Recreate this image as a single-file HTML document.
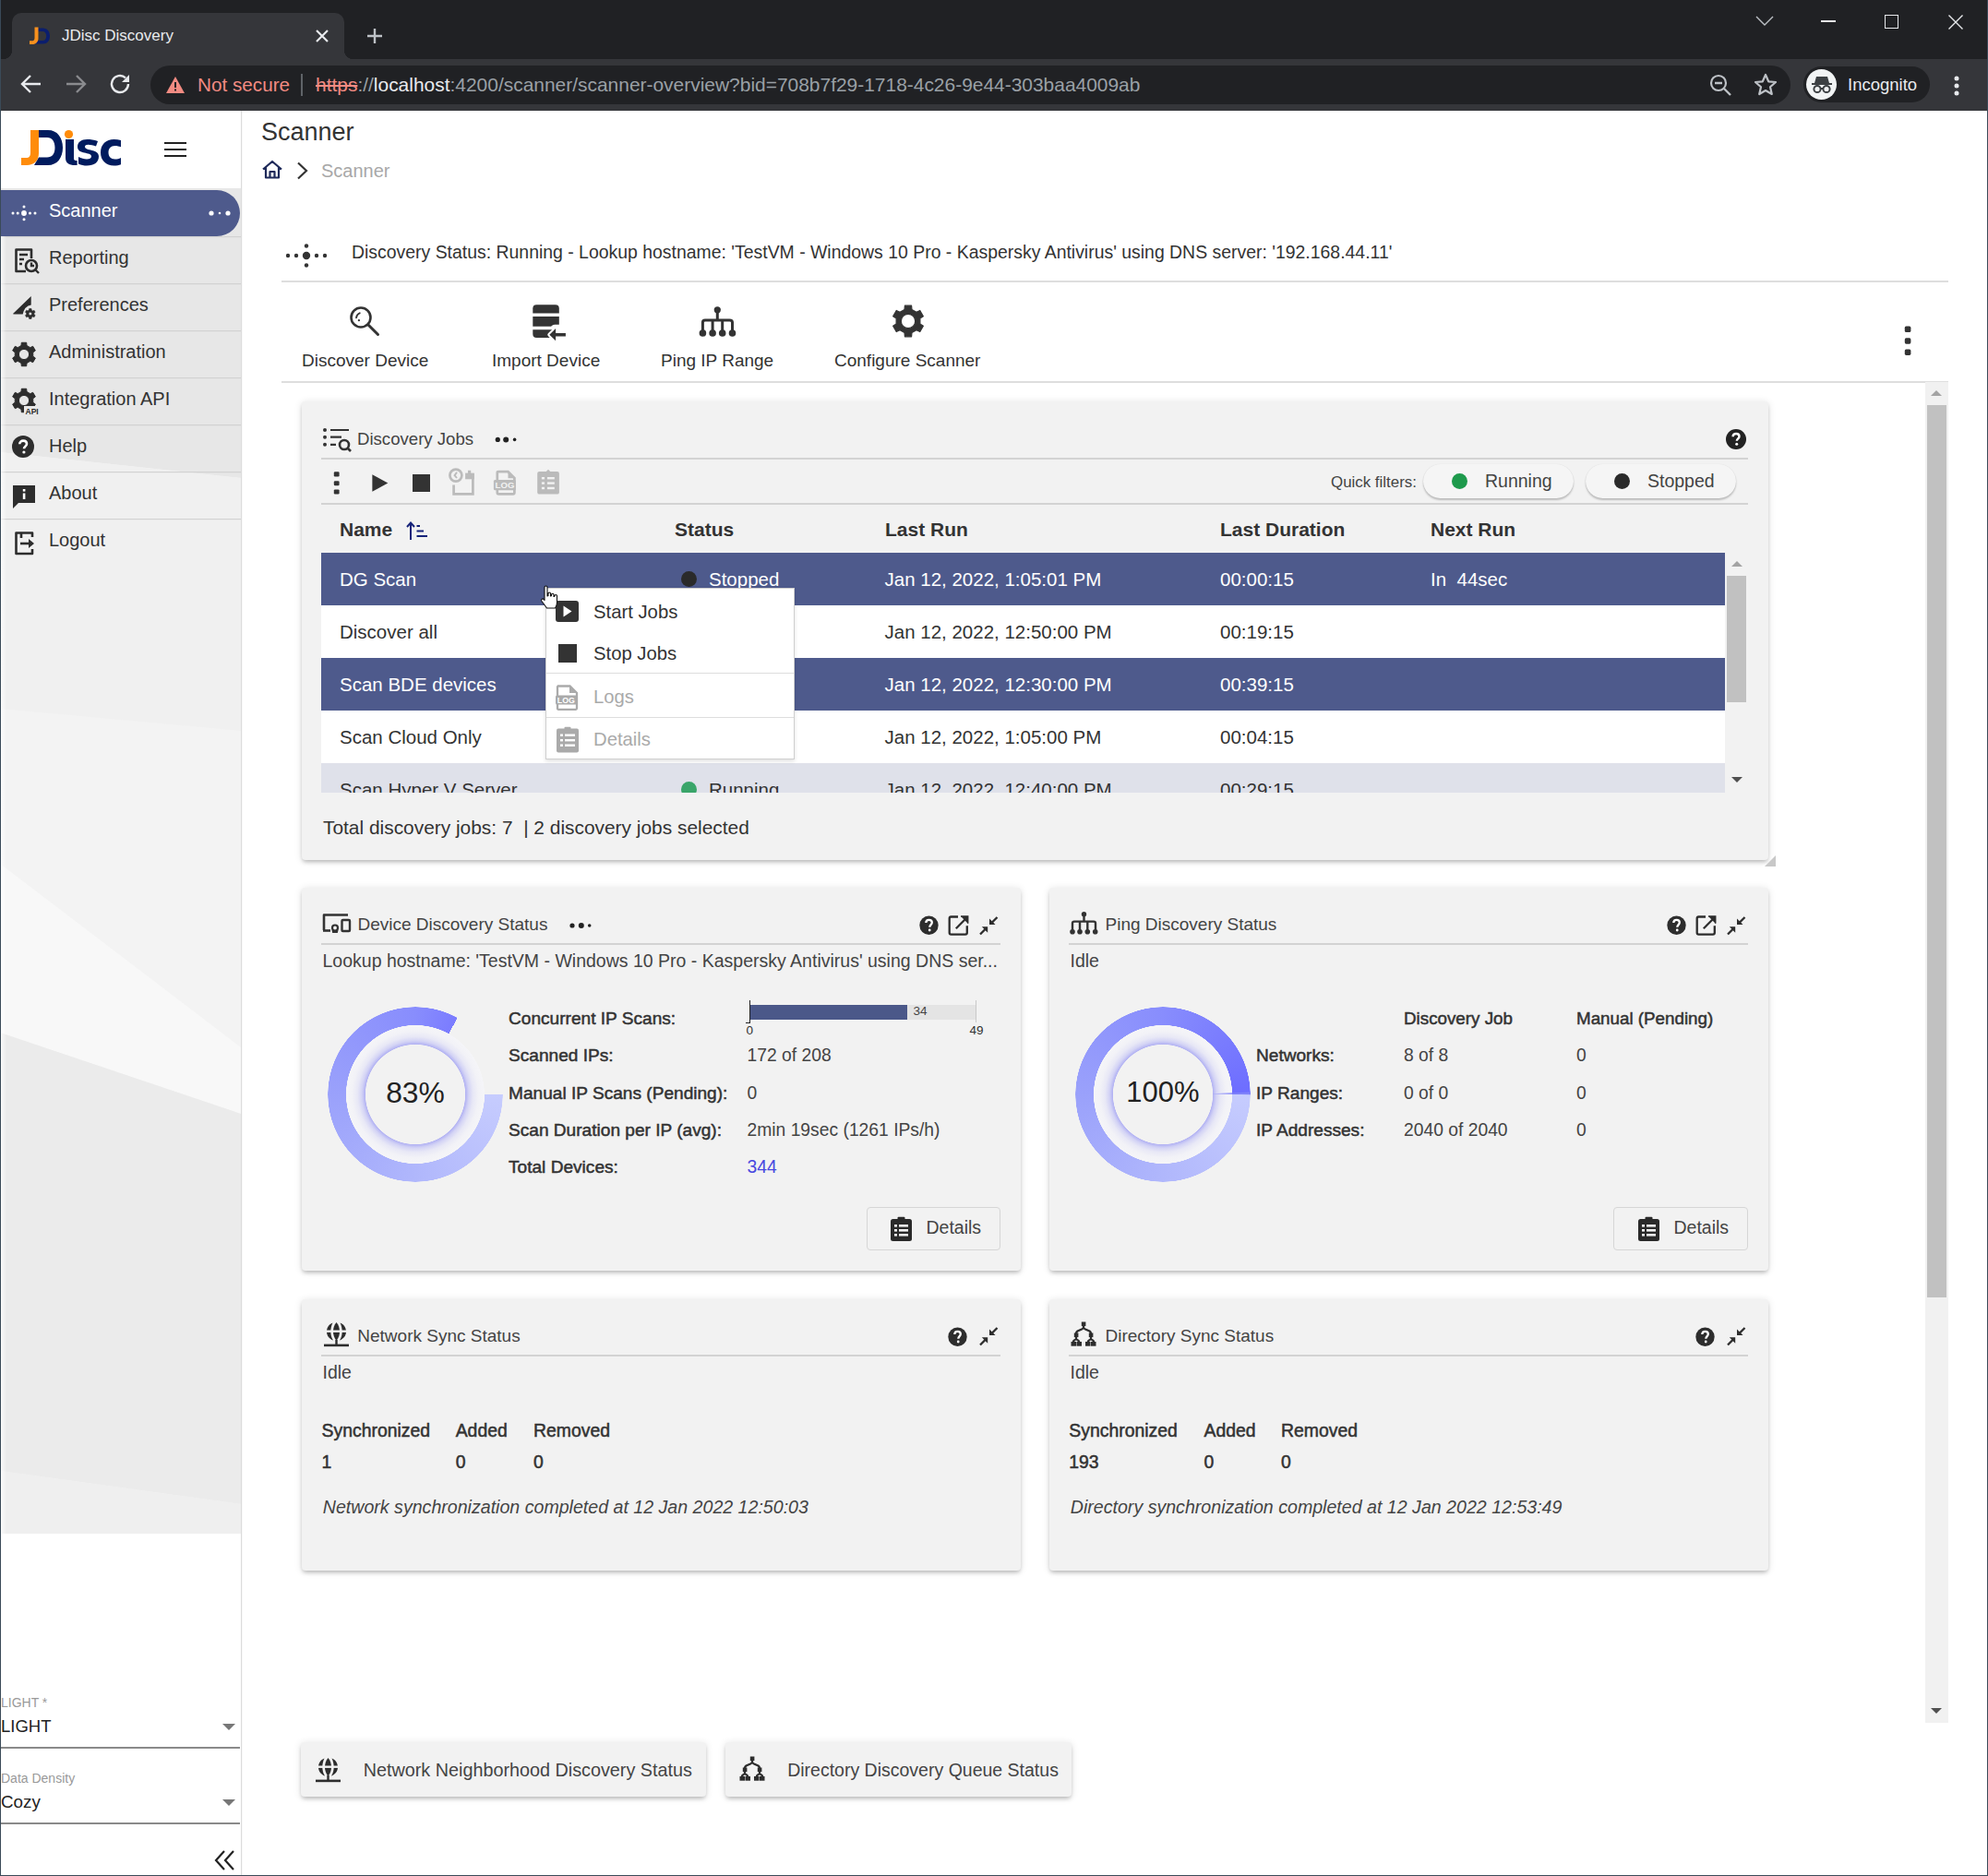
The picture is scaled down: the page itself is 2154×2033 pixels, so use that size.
<!DOCTYPE html>
<html><head><meta charset="utf-8"><title>JDisc Discovery</title>
<style>
*{box-sizing:border-box;margin:0;padding:0}
html,body{width:2154px;height:2033px;overflow:hidden;background:#fff;font-family:"Liberation Sans",sans-serif;color:#333}
.a{position:absolute}
.t{position:absolute;white-space:nowrap;line-height:30px;height:30px}
.sb{-webkit-text-stroke:0.5px currentColor}
svg{position:absolute;overflow:visible}
</style></head><body>
<!-- ============ BROWSER CHROME ============ -->
<div class="a" style="left:0;top:0;width:2154px;height:64px;background:#202124"></div>
<div class="a" style="left:13px;top:14px;width:360px;height:50px;background:#35363a;border-radius:10px 10px 0 0"></div>
<div class="a" style="left:3px;top:54px;width:10px;height:10px;background:radial-gradient(circle at 0 0,#202124 10px,#35363a 10.5px)"></div>
<div class="a" style="left:373px;top:54px;width:10px;height:10px;background:radial-gradient(circle at 100% 0,#202124 10px,#35363a 10.5px)"></div>
<!-- favicon -->
<svg style="left:31px;top:29px" width="24" height="20" viewBox="0 0 24 20">
 <path d="M10 1.5H15.5C20 1.5 23 5 23 10C23 15 20 18.5 15.5 18.5H7.5L9.5 15H15C17.8 15 19.2 13 19.2 10C19.2 7 17.8 5 15 5H10Z" fill="#0b1e6e"/>
 <path d="M6.5 0.5H10.5V12.5C10.5 16.5 8 19 4 19H1V15.3H3.5C5.5 15.3 6.5 14.5 6.5 12Z" fill="#f7901e"/>
</svg>
<div class="t" style="left:67px;top:24px;font-size:17px;color:#e8eaed">JDisc Discovery</div>
<svg style="left:341px;top:31px" width="16" height="16" viewBox="0 0 16 16"><path d="M2 2L14 14M14 2L2 14" stroke="#e8eaed" stroke-width="2.2"/></svg>
<svg style="left:397px;top:30px" width="18" height="18" viewBox="0 0 18 18"><path d="M9 1V17M1 9H17" stroke="#bdc1c6" stroke-width="2.4"/></svg>
<!-- window controls -->
<svg style="left:1902px;top:17px" width="20" height="12" viewBox="0 0 20 12"><path d="M1 1L10 10L19 1" stroke="#bdc1c6" stroke-width="1.4" fill="none"/></svg>
<div class="a" style="left:1973px;top:22px;width:16px;height:1.5px;background:#e8eaed"></div>
<div class="a" style="left:2042px;top:16px;width:15px;height:15px;border:1.5px solid #e8eaed"></div>
<svg style="left:2111px;top:16px" width="16" height="16" viewBox="0 0 16 16"><path d="M0.5 0.5L15.5 15.5M15.5 0.5L0.5 15.5" stroke="#e8eaed" stroke-width="1.4"/></svg>
<!-- toolbar -->
<div class="a" style="left:0;top:64px;width:2154px;height:56px;background:#35363a"></div>
<svg style="left:22px;top:80px" width="24" height="22" viewBox="0 0 24 22"><path d="M22 11H3M11 2L2 11L11 20" stroke="#e8eaed" stroke-width="2.4" fill="none"/></svg>
<svg style="left:70px;top:80px" width="24" height="22" viewBox="0 0 24 22"><path d="M2 11H21M13 2L22 11L13 20" stroke="#8a8b8e" stroke-width="2.4" fill="none"/></svg>
<svg style="left:119px;top:80px" width="24" height="22" viewBox="0 0 24 22"><path d="M20 11A9 9 0 1 1 17 4.3" stroke="#e8eaed" stroke-width="2.4" fill="none"/><path d="M21 1V9H13Z" fill="#e8eaed"/></svg>
<div class="a" style="left:163px;top:71px;width:1777px;height:42px;background:#202124;border-radius:21px"></div>
<svg style="left:180px;top:83px" width="20" height="18" viewBox="0 0 20 18"><path d="M10 0L20 18H0Z" fill="#f28b82"/><path d="M9 6H11V12H9ZM9 13.5H11V15.5H9Z" fill="#202124"/></svg>
<div class="t" style="left:214px;top:77px;font-size:20.7px;color:#f28b82">Not secure</div>
<div class="a" style="left:326px;top:80px;width:2px;height:24px;background:#5f6368"></div>
<div class="t" style="left:342px;top:77px;font-size:20.95px;color:#9aa0a6"><span style="color:#f28b82;text-decoration:line-through">https</span>://<span style="color:#e8eaed">localhost</span>:4200/scanner/scanner-overview?bid=708b7f29-1718-4c26-9e44-303baa4009ab</div>
<svg style="left:1852px;top:80px" width="26" height="26" viewBox="0 0 26 26"><circle cx="10" cy="10" r="8" stroke="#bdc1c6" stroke-width="2.2" fill="none"/><path d="M6 10H14M16 16L23 23" stroke="#bdc1c6" stroke-width="2.4"/></svg>
<svg style="left:1900px;top:79px" width="26" height="26" viewBox="0 0 26 26"><path d="M13 2L16.2 9.3L24 10L18 15.3L19.8 23L13 19L6.2 23L8 15.3L2 10L9.8 9.3Z" stroke="#bdc1c6" stroke-width="2.2" fill="none" stroke-linejoin="round"/></svg>
<div class="a" style="left:1954px;top:72px;width:137px;height:39px;background:#202124;border-radius:20px"></div>
<div class="a" style="left:1957px;top:75px;width:33px;height:33px;background:#f1f3f4;border-radius:50%"></div>
<svg style="left:1962px;top:82px" width="24" height="20" viewBox="0 0 24 20"><path d="M6 1H18L20 8H4Z" fill="#3c4043"/><path d="M1 9H23" stroke="#3c4043" stroke-width="2"/><circle cx="7" cy="14.5" r="3.6" stroke="#3c4043" stroke-width="2" fill="none"/><circle cx="17" cy="14.5" r="3.6" stroke="#3c4043" stroke-width="2" fill="none"/><path d="M10.5 14H13.5" stroke="#3c4043" stroke-width="2"/></svg>
<div class="t" style="left:2002px;top:77px;font-size:18.5px;color:#e8eaed">Incognito</div>
<svg style="left:2116px;top:82px" width="8" height="22" viewBox="0 0 8 22"><circle cx="4" cy="3" r="2.5" fill="#e8eaed"/><circle cx="4" cy="11" r="2.5" fill="#e8eaed"/><circle cx="4" cy="19" r="2.5" fill="#e8eaed"/></svg>
<!-- window borders -->
<div class="a" style="left:0;top:0;width:1px;height:2033px;background:#3a4a58;z-index:50"></div>
<div class="a" style="left:2153px;top:0;width:1px;height:2033px;background:#3a4a58;z-index:50"></div>
<div class="a" style="left:0;top:2032px;width:2154px;height:1px;background:#3a4a58;z-index:50"></div>

<!-- ============ SIDEBAR ============ -->
<svg style="left:0;top:120px" width="262" height="1913" viewBox="0 120 262 1913">
 <rect x="0" y="120" width="261" height="84" fill="#fff"/>
 <rect x="0" y="204" width="261" height="1458" fill="#f3f3f3"/>
 <polygon points="0,204 261,204 261,518 0,490" fill="#e7e7e7"/>
 <polygon points="0,490 261,518 261,792 0,768" fill="#f0f0f0"/>
 <polygon points="0,936 261,1135 261,1207 0,1119" fill="#f8f8f8"/>
 <polygon points="0,1119 261,1207 261,1630 0,1594" fill="#ebebeb"/>
 <polygon points="0,1594 261,1630 261,1662 0,1662" fill="#efefef"/>
 <rect x="0" y="1662" width="261" height="371" fill="#fff"/>
 <rect x="261" y="120" width="1.2" height="1913" fill="#dcdcdc"/>
 <g fill="#d2d2d2"><rect x="0" y="256" width="261" height="1.2"/><rect x="0" y="307" width="261" height="1.2"/><rect x="0" y="358" width="261" height="1.2"/><rect x="0" y="409" width="261" height="1.2"/><rect x="0" y="460" width="261" height="1.2"/><rect x="0" y="511" width="261" height="1.2"/><rect x="0" y="562" width="261" height="1.2"/></g>
</svg>
<div class="a" style="left:1px;top:256px;width:6px;height:1406px;background:linear-gradient(to right,rgba(255,255,255,0.75),rgba(255,255,255,0))"></div>
<!-- logo -->
<svg style="left:22px;top:140px" width="112" height="42" viewBox="0 0 112 42">
 <path d="M20 1H30C40 1 46 9 46 20C46 31 40 39 30 39H15L20 30.5H29C34.5 30.5 37.5 26.5 37.5 20C37.5 13.5 34.5 9 29 9H20Z" fill="#001b5e"/>
 <path d="M11 1H20V26C20 34 15 39 7 39H1V31H6C10 31 11 29 11 25Z" fill="#ff8c0a"/>
 <circle cx="52.5" cy="5.5" r="4.6" fill="#ff8c0a"/>
 <path d="M49 11H58V32C58 33.5 59 34 61.6 34V39C53 39.5 49 37 49 31Z" fill="#001b5e"/>
 <path d="M84 13C80 11.5 76 11 72.5 11C66 11 62 14 62 19C62 28 77 24 77 29.5C77 31.5 75 32.5 72 32.5C69 32.5 66 31.5 63 30V37.5C66 39 69 39.5 72 39.5C80 39.5 85 36 85 29.5C85 21 70 24 70 19C70 17.5 71.5 16.8 73.5 16.8C76 16.8 79 17.5 82 18.5Z" fill="#001b5e"/>
 <path d="M109 12C106.5 11.3 104 11 101.5 11C93 11 87 16.5 87 25.3C87 34 93 39.5 101.5 39.5C104.5 39.5 107 39 109 38.2V31C107 32 105 32.5 102.5 32.5C98 32.5 95.5 29.5 95.5 25.3C95.5 21 98 18 102.5 18C105 18 107 18.6 109 19.3Z" fill="#001b5e"/>
</svg>
<div class="a" style="left:178px;top:154px;width:24px;height:2.3px;background:#222"></div>
<div class="a" style="left:178px;top:161px;width:24px;height:2.3px;background:#222"></div>
<div class="a" style="left:178px;top:167.5px;width:24px;height:2.3px;background:#222"></div>
<!-- nav items -->
<div class="a" style="left:0;top:206px;width:260px;height:50px;background:#4e5a8c;border-radius:0 25px 25px 0"></div>
<svg style="left:12px;top:218px" width="28" height="26" viewBox="0 0 28 26"><g fill="#fff"><circle cx="2" cy="13" r="1.5"/><circle cx="7.2" cy="13" r="1.5"/><circle cx="14" cy="13" r="2.9"/><circle cx="20.5" cy="13" r="1.5"/><circle cx="26" cy="13" r="1.5"/><circle cx="14" cy="6.1" r="1.5"/><circle cx="14" cy="19.8" r="1.5"/></g></svg>
<div class="t" style="left:53px;top:213px;font-size:20px;color:#fff">Scanner</div>
<svg style="left:222px;top:226px" width="30" height="10" viewBox="0 0 30 10"><g fill="#fff"><circle cx="7" cy="5" r="2.6"/><circle cx="16" cy="5" r="1.3"/><circle cx="25" cy="5" r="2.6"/></g></svg>
<!-- reporting icon -->
<svg style="left:14px;top:268px" width="30" height="30" viewBox="0 0 30 30"><path d="M14 26H3.5V2.5H20V12" stroke="#2d2d2d" stroke-width="2.6" fill="none" stroke-linejoin="round"/><path d="M7 8H16M7 13H12M7 18H10" stroke="#2d2d2d" stroke-width="2.4"/><circle cx="20" cy="20" r="6" stroke="#2d2d2d" stroke-width="2.6" fill="none"/><path d="M20 16.5V20H23M24.5 24.5L28 28" stroke="#2d2d2d" stroke-width="2.4" fill="none"/></svg>
<div class="t" style="left:53px;top:264px;font-size:20px">Reporting</div>
<!-- preferences icon -->
<svg style="left:13px;top:318px" width="30" height="30" viewBox="0 0 30 30"><path d="M1 22L20.7 2.9V12.6Q13.5 13.8 11.7 22.6H1.8Z" fill="#2d2d2d"/><path d="M18.50 18.01 L18.58 16.53 L21.02 16.53 L21.10 18.01 L22.61 18.88 L23.92 18.21 L25.14 20.33 L23.91 21.13 L23.91 22.87 L25.14 23.67 L23.92 25.79 L22.61 25.12 L21.10 25.99 L21.02 27.47 L18.58 27.47 L18.50 25.99 L16.99 25.12 L15.68 25.79 L14.46 23.67 L15.69 22.87 L15.69 21.13 L14.46 20.33 L15.68 18.21 L16.99 18.88Z M21.60 22.00 A1.8 1.8 0 1 0 18.00 22.00 A1.8 1.8 0 1 0 21.60 22.00Z" fill="#2d2d2d" fill-rule="evenodd" stroke="#2d2d2d" stroke-width="0.6" stroke-linejoin="round"/></svg>
<div class="t" style="left:53px;top:315px;font-size:20px">Preferences</div>
<!-- admin icon -->
<svg style="left:12px;top:370px" width="28" height="28" viewBox="0 0 28 28"><path d="M11.01 4.46 L11.30 1.28 L16.70 1.28 L16.99 4.46 L20.77 6.64 L23.66 5.30 L26.36 9.98 L23.76 11.82 L23.76 16.18 L26.36 18.02 L23.66 22.70 L20.77 21.36 L16.99 23.54 L16.70 26.72 L11.30 26.72 L11.01 23.54 L7.23 21.36 L4.34 22.70 L1.64 18.02 L4.24 16.18 L4.24 11.82 L1.64 9.98 L4.34 5.30 L7.23 6.64Z M19.60 14.00 A5.6 5.6 0 1 0 8.40 14.00 A5.6 5.6 0 1 0 19.60 14.00Z" fill="#2d2d2d" fill-rule="evenodd" stroke="#2d2d2d" stroke-width="1" stroke-linejoin="round"/></svg>
<div class="t" style="left:53px;top:366px;font-size:20px">Administration</div>
<!-- integration api icon -->
<svg style="left:12px;top:421px" width="30" height="30" viewBox="0 0 30 30"><path d="M11.01 3.46 L11.30 0.28 L16.70 0.28 L16.99 3.46 L20.77 5.64 L23.66 4.30 L26.36 8.98 L23.76 10.82 L23.76 15.18 L26.36 17.02 L23.66 21.70 L20.77 20.36 L16.99 22.54 L16.70 25.72 L11.30 25.72 L11.01 22.54 L7.23 20.36 L4.34 21.70 L1.64 17.02 L4.24 15.18 L4.24 10.82 L1.64 8.98 L4.34 4.30 L7.23 5.64Z M19.60 13.00 A5.6 5.6 0 1 0 8.40 13.00 A5.6 5.6 0 1 0 19.60 13.00Z" fill="#2d2d2d" fill-rule="evenodd" stroke="#2d2d2d" stroke-width="1" stroke-linejoin="round"/><path d="M14 19H30V30H14Z" fill="#e7e7e7"/><text x="15.5" y="27.5" font-family="Liberation Sans" font-weight="700" font-size="8.5" fill="#2d2d2d">API</text></svg>
<div class="t" style="left:53px;top:417px;font-size:20px">Integration API</div>
<!-- help icon -->
<svg style="left:13px;top:472px" width="26" height="26" viewBox="0 0 26 26"><circle cx="12" cy="12" r="12" fill="#2d2d2d"/><path d="M8.3 9.3C8.3 7 10 5.6 12.2 5.6C14.4 5.6 16 7 16 9C16 11.5 13 11.7 13 14.3" stroke="#fff" stroke-width="2.6" fill="none"/><circle cx="12.9" cy="18" r="1.6" fill="#fff"/></svg>
<div class="t" style="left:53px;top:468px;font-size:20px">Help</div>
<!-- about icon -->
<svg style="left:12px;top:524px" width="28" height="28" viewBox="0 0 28 28"><path d="M2 2H26V21H8L2 27Z" fill="#2d2d2d"/><rect x="12.8" y="6" width="2.6" height="2.6" fill="#fff"/><rect x="12.8" y="10.5" width="2.6" height="6.5" fill="#fff"/></svg>
<div class="t" style="left:53px;top:519px;font-size:20px">About</div>
<!-- logout icon -->
<svg style="left:14px;top:574px" width="28" height="30" viewBox="0 0 28 30"><path d="M9 9V3.5H21V8M21 21V26H3.5V3.5H9" stroke="#2d2d2d" stroke-width="2.6" fill="none" stroke-linejoin="round"/><path d="M8 15H20" stroke="#2d2d2d" stroke-width="2.6"/><path d="M17 10L23 15L17 20Z" fill="#2d2d2d"/></svg>
<div class="t" style="left:53px;top:570px;font-size:20px">Logout</div>
<!-- bottom selects -->
<div class="t" style="left:1px;top:1830px;font-size:14px;color:#999">LIGHT *</div>
<div class="t" style="left:1px;top:1856px;font-size:18.5px;color:#222">LIGHT</div>
<svg style="left:241px;top:1868px" width="14" height="8" viewBox="0 0 14 8"><path d="M0 0H14L7 7Z" fill="#777"/></svg>
<div class="a" style="left:1px;top:1893px;width:259px;height:1.5px;background:#8a8a8a"></div>
<div class="t" style="left:1px;top:1912px;font-size:14px;color:#999">Data Density</div>
<div class="t" style="left:1px;top:1938px;font-size:18.8px;color:#222">Cozy</div>
<svg style="left:241px;top:1950px" width="14" height="8" viewBox="0 0 14 8"><path d="M0 0H14L7 7Z" fill="#777"/></svg>
<div class="a" style="left:1px;top:1975px;width:259px;height:1.5px;background:#8a8a8a"></div>
<svg style="left:232px;top:2005px" width="24" height="22" viewBox="0 0 24 22"><path d="M11 1L2 11L11 21M21 1L12 11L21 21" stroke="#222" stroke-width="2.2" fill="none"/></svg>

<!-- ============ HEADER ============ -->
<div class="t" style="left:283px;top:128px;font-size:27px;color:#333">Scanner</div>
<svg style="left:283px;top:173px" width="24" height="21" viewBox="0 0 24 21"><path d="M2 10.5L12 2L22 10.5M5 8.5V19.5H19V8.5M9.5 19.5V13H14.5V19.5" stroke="#1f2a5a" stroke-width="2.2" fill="none" stroke-linejoin="round"/></svg>
<svg style="left:321px;top:175px" width="14" height="20" viewBox="0 0 14 20"><path d="M2 1.5L11 10L2 18.5" stroke="#333" stroke-width="2.2" fill="none"/></svg>
<div class="t" style="left:348px;top:170px;font-size:20px;color:#a8a8a8">Scanner</div>
<!-- status line -->
<svg style="left:309px;top:262.7px" width="48" height="28" viewBox="0 0 48 28"><g fill="#333"><circle cx="3" cy="14" r="2.2"/><circle cx="12" cy="14" r="2.2"/><circle cx="23" cy="14" r="4.2"/><circle cx="34" cy="14" r="2.2"/><circle cx="43" cy="14" r="2.2"/><circle cx="23" cy="3.5" r="2.2"/><circle cx="23" cy="24.5" r="2.2"/></g></svg>
<div class="t" style="left:381px;top:258px;font-size:19.43px;color:#333">Discovery Status: Running - Lookup hostname: 'TestVM - Windows 10 Pro - Kaspersky Antivirus' using DNS server: '192.168.44.11'</div>
<div class="a" style="left:305px;top:304px;width:1806px;height:1.5px;background:#dedede"></div>
<!-- toolbar -->
<svg style="left:378px;top:331px" width="36" height="36" viewBox="0 0 36 36"><circle cx="13" cy="13" r="10.5" stroke="#333" stroke-width="2.6" fill="none"/><path d="M21 21L31.5 31.5" stroke="#333" stroke-width="3" stroke-linecap="round"/><path d="M11.8 8.3A6.5 6.5 0 0 0 8 13.3" stroke="#333" stroke-width="1.8" fill="none" stroke-linecap="round"/><circle cx="10.9" cy="16.2" r="1.15" fill="#333"/></svg>
<div class="t" style="left:327px;top:376px;font-size:19px">Discover Device</div>
<svg style="left:576px;top:329px" width="42" height="44" viewBox="0 0 42 44"><path d="M5.3 1.3H25.8Q29.8 1.3 29.8 5.3V10.4H1.3V5.3Q1.3 1.3 5.3 1.3Z" fill="#333"/><path d="M1.3 14.1H29.8V22.7H25Q23 22.7 21 24.7H1.3Z" fill="#333"/><path d="M1.3 28.2H23.5V37H5.3Q1.3 37 1.3 33Z" fill="#333"/><path d="M19.3 33.7L26.1 27V32H36.9V35.5H26.1V40.3Z" fill="#333" stroke="#fff" stroke-width="4" stroke-linejoin="round"/><path d="M19.3 33.7L26.1 27V32H36.9V35.5H26.1V40.3Z" fill="#333"/></svg>
<div class="t" style="left:533px;top:376px;font-size:19px">Import Device</div>
<svg style="left:756px;top:331px" width="44" height="36" viewBox="0 0 44 36"><circle cx="21.3" cy="4.8" r="3.6" fill="#333"/><path d="M21.3 5V16M5.4 30V18.5Q5.4 16 8 16H34.5Q37.5 16 37.5 18.5V30M16.1 16V30M26.7 16V30" stroke="#333" stroke-width="3" fill="none"/><g fill="#333"><circle cx="5.4" cy="30" r="3.8"/><circle cx="16.1" cy="30" r="3.8"/><circle cx="26.7" cy="30" r="3.8"/><circle cx="37.5" cy="30" r="3.8"/></g></svg>
<div class="t" style="left:716px;top:376px;font-size:19px">Ping IP Range</div>
<svg style="left:964.7px;top:329.2px" width="38" height="38" viewBox="0 0 38 38"><path d="M15.05 6.40 L15.42 2.18 L22.58 2.18 L22.95 6.40 L27.93 9.28 L31.78 7.49 L35.36 13.68 L31.88 16.12 L31.88 21.88 L35.36 24.32 L31.78 30.51 L27.93 28.72 L22.95 31.60 L22.58 35.82 L15.42 35.82 L15.05 31.60 L10.07 28.72 L6.22 30.51 L2.64 24.32 L6.12 21.88 L6.12 16.12 L2.64 13.68 L6.22 7.49 L10.07 9.28Z M26.70 19.00 A7.7 7.7 0 1 0 11.30 19.00 A7.7 7.7 0 1 0 26.70 19.00Z" fill="#333" fill-rule="evenodd" stroke="#333" stroke-width="1.2" stroke-linejoin="round"/></svg>
<div class="t" style="left:904px;top:376px;font-size:19px">Configure Scanner</div>
<svg style="left:2062px;top:353px" width="12" height="32" viewBox="0 0 12 32"><g fill="#333"><rect x="1.8" y="0.6" width="6.6" height="6.4" rx="1.6"/><rect x="1.8" y="13.3" width="6.6" height="6.4" rx="1.6"/><rect x="1.8" y="25.5" width="6.6" height="6.4" rx="1.6"/></g></svg>
<div class="a" style="left:305px;top:413px;width:1806px;height:1.5px;background:#dedede"></div>
<!-- main scrollbar -->
<div class="a" style="left:2086px;top:414px;width:25px;height:1453px;background:#f1f1f1"></div>
<div class="a" style="left:2088px;top:439px;width:21px;height:967px;background:#c1c1c1"></div>
<svg style="left:2092px;top:423px" width="12" height="7" viewBox="0 0 12 7"><path d="M0 6H12L6 0Z" fill="#a3a3a3"/></svg>
<svg style="left:2092px;top:1851px" width="12" height="7" viewBox="0 0 12 7"><path d="M0 0H12L6 6Z" fill="#505050"/></svg>

<!-- ============ CARD 1: DISCOVERY JOBS ============ -->
<div class="a" style="left:327px;top:435px;width:1589px;height:497px;background:#f2f2f2;border-radius:4px;box-shadow:0 3px 4px -1px rgba(0,0,0,.22),0 1px 9px 0 rgba(0,0,0,.12)"></div>
<svg style="left:1911px;top:926px" width="14" height="14" viewBox="0 0 14 14"><path d="M13 1V13H1Z" fill="#c8c8c8"/></svg>
<svg style="left:348px;top:462px" width="36" height="30" viewBox="0 0 36 30"><g fill="#333"><circle cx="4" cy="4" r="2"/><circle cx="4" cy="11.7" r="2"/><circle cx="4" cy="19.8" r="2"/></g><path d="M10 4H30M10 11.7H22M10 19.8H16" stroke="#333" stroke-width="2.2"/><circle cx="25" cy="20" r="5" stroke="#333" stroke-width="2.6" fill="none"/><path d="M28.5 23.5L32 27" stroke="#333" stroke-width="2.6"/></svg>
<div class="t" style="left:387px;top:461px;font-size:18.6px;color:#444">Discovery Jobs</div>
<svg style="left:534px;top:471px" width="28" height="11" viewBox="0 0 28 11"><g fill="#222"><circle cx="5.3" cy="5.4" r="2.6"/><circle cx="14.2" cy="5.4" r="3"/><circle cx="23.6" cy="5.4" r="1.8"/></g></svg>
<svg style="left:1869px;top:464px" width="24" height="24" viewBox="0 0 24 24"><circle cx="12" cy="12" r="11" fill="#222"/><path d="M8.6 9.3C8.6 7.2 10.1 6 12.1 6C14.1 6 15.5 7.2 15.5 9C15.5 11.3 12.8 11.5 12.8 13.8" stroke="#fff" stroke-width="2.4" fill="none"/><circle cx="12.7" cy="17.3" r="1.5" fill="#fff"/></svg>
<div class="a" style="left:348px;top:496px;width:1546px;height:1.5px;background:#d3d3d3"></div>
<!-- card toolbar -->
<svg style="left:361px;top:511px" width="8" height="29" viewBox="0 0 8 29"><g fill="#333"><rect x="0.8" y="0.3" width="5.8" height="5.2" rx="1.2"/><rect x="0.8" y="10.2" width="5.8" height="5" rx="1.2"/><rect x="0.8" y="19.4" width="5.8" height="5" rx="1.2"/></g></svg>
<svg style="left:403px;top:514px" width="18" height="19" viewBox="0 0 18 19"><path d="M0.4 0.2L17.3 9.4L0.4 18.7Z" fill="#333"/></svg>
<div class="a" style="left:447px;top:514px;width:19px;height:19px;background:#333"></div>
<svg style="left:480px;top:500px" width="135" height="45" viewBox="0 0 135 45"><g fill="none" stroke="#bbb" stroke-width="2.7"><circle cx="13.9" cy="15.1" r="6.5"/><path d="M11.6 25.5V35.3H32.4V13"/><path d="M58.8 23V11.4Q58.8 11.2 60 11.2H70.5L77.4 18V33.8Q77.4 35.3 75.9 35.3H60.3Q58.8 35.3 58.8 33.8V31"/></g><path d="M15 11.8L12.6 15.2L15 18" stroke="#bbb" stroke-width="1.9" fill="none"/><path d="M24.1 12.6H33.8V19.3H24.1Z" fill="#bbb"/><rect x="27" y="9.8" width="3.2" height="3.5" fill="#bbb"/><path d="M70.5 11.2V18.3H78.7Z" fill="#bbb"/><rect x="54.9" y="20" width="23.9" height="11.2" rx="1.5" fill="#bbb"/><text x="56.4" y="29.3" font-family="Liberation Sans" font-weight="700" font-size="9.6" letter-spacing="0.2" fill="#f2f2f2">LOG</text><rect x="102.2" y="10.9" width="23.7" height="24.7" rx="2.2" fill="#bbb"/><path d="M111.3 11.5L114 8.8L116.7 11.5Z" fill="#bbb"/><g fill="#f2f2f2"><rect x="106.9" y="17" width="3.1" height="2.4"/><rect x="106.9" y="22.4" width="3.1" height="2.4"/><rect x="106.9" y="27.8" width="3.1" height="2.4"/><rect x="113" y="17" width="7.8" height="2.4"/><rect x="113" y="22.4" width="7.8" height="2.4"/><rect x="113" y="27.8" width="7.8" height="2.4"/></g></svg>
<div class="t" style="left:1442px;top:508px;font-size:16.9px;color:#444">Quick filters:</div>
<div class="a" style="left:1542px;top:503px;width:163px;height:37px;background:#f5f5f5;border-radius:19px;box-shadow:0 2px 2px rgba(0,0,0,0.22),0 0 1px rgba(0,0,0,0.12)"></div>
<div class="a" style="left:1573px;top:513px;width:17px;height:17px;border-radius:50%;background:#1e9a4c"></div>
<div class="t" style="left:1609px;top:506px;font-size:19.5px;color:#444">Running</div>
<div class="a" style="left:1718px;top:503px;width:163px;height:37px;background:#f5f5f5;border-radius:19px;box-shadow:0 2px 2px rgba(0,0,0,0.22),0 0 1px rgba(0,0,0,0.12)"></div>
<div class="a" style="left:1749px;top:513px;width:17px;height:17px;border-radius:50%;background:#2a2a2a"></div>
<div class="t" style="left:1785px;top:506px;font-size:19.5px;color:#444">Stopped</div>
<div class="a" style="left:348px;top:545px;width:1546px;height:1.5px;background:#d3d3d3"></div>
<!-- table header -->
<div class="t" style="left:368px;top:559px;font-size:21px;font-weight:700;color:#333">Name</div>
<svg style="left:440px;top:565px" width="26" height="22" viewBox="0 0 26 22"><path d="M5 2V20M1 6L5 1.5L9 6" stroke="#16237a" stroke-width="2" fill="none"/><path d="M11.5 5H15M11.5 10.5H19M11.5 16H23" stroke="#16237a" stroke-width="2.2"/></svg>
<div class="t" style="left:731px;top:559px;font-size:21px;font-weight:700;color:#333">Status</div>
<div class="t" style="left:959px;top:559px;font-size:21px;font-weight:700;color:#333">Last Run</div>
<div class="t" style="left:1322px;top:559px;font-size:21px;font-weight:700;color:#333">Last Duration</div>
<div class="t" style="left:1550px;top:559px;font-size:21px;font-weight:700;color:#333">Next Run</div>
<!-- table body -->
<div class="a" style="left:348px;top:599px;width:1521px;height:260px;overflow:hidden">
 <div class="a" style="left:0;top:0;width:1521px;height:57px;background:#4e5a8c"></div>
 <div class="a" style="left:0;top:57px;width:1521px;height:57px;background:#fff"></div>
 <div class="a" style="left:0;top:114px;width:1521px;height:57px;background:#4e5a8c"></div>
 <div class="a" style="left:0;top:171px;width:1521px;height:57px;background:#fff"></div>
 <div class="a" style="left:0;top:228px;width:1521px;height:57px;background:#dfe1ea"></div>
 <div class="t" style="left:20px;top:13.5px;font-size:20.5px;color:#fff">DG Scan</div>
 <div class="a" style="left:390px;top:20px;width:17px;height:17px;border-radius:50%;background:#2a2a2a"></div>
 <div class="t" style="left:420px;top:13.5px;font-size:20.5px;color:#fff">Stopped</div>
 <div class="t" style="left:610.5px;top:13.5px;font-size:20.5px;color:#fff">Jan 12, 2022, 1:05:01 PM</div>
 <div class="t" style="left:974px;top:13.5px;font-size:20.5px;color:#fff">00:00:15</div>
 <div class="t" style="left:1202px;top:13.5px;font-size:20.5px;color:#fff">In&nbsp; 44sec</div>
 <div class="t" style="left:20px;top:70.5px;font-size:20.5px;color:#333">Discover all</div>
 <div class="t" style="left:610.5px;top:70.5px;font-size:20.5px;color:#333">Jan 12, 2022, 12:50:00 PM</div>
 <div class="t" style="left:974px;top:70.5px;font-size:20.5px;color:#333">00:19:15</div>
 <div class="t" style="left:20px;top:127.5px;font-size:20.5px;color:#fff">Scan BDE devices</div>
 <div class="t" style="left:610.5px;top:127.5px;font-size:20.5px;color:#fff">Jan 12, 2022, 12:30:00 PM</div>
 <div class="t" style="left:974px;top:127.5px;font-size:20.5px;color:#fff">00:39:15</div>
 <div class="t" style="left:20px;top:184.5px;font-size:20.5px;color:#333">Scan Cloud Only</div>
 <div class="t" style="left:610.5px;top:184.5px;font-size:20.5px;color:#333">Jan 12, 2022, 1:05:00 PM</div>
 <div class="t" style="left:974px;top:184.5px;font-size:20.5px;color:#333">00:04:15</div>
 <div class="t" style="left:20px;top:241.5px;font-size:20.5px;color:#333">Scan Hyper V Server</div>
 <div class="a" style="left:390px;top:248px;width:17px;height:17px;border-radius:50%;background:#3aa56a"></div>
 <div class="t" style="left:420px;top:241.5px;font-size:20.5px;color:#333">Running</div>
 <div class="t" style="left:610.5px;top:241.5px;font-size:20.5px;color:#333">Jan 12, 2022, 12:40:00 PM</div>
 <div class="t" style="left:974px;top:241.5px;font-size:20.5px;color:#333">00:29:15</div>
</div>
<!-- inner scrollbar -->
<div class="a" style="left:1871px;top:624px;width:21px;height:137px;background:#c1c1c1"></div>
<svg style="left:1876px;top:608px" width="12" height="7" viewBox="0 0 12 7"><path d="M0 6H12L6 0Z" fill="#a3a3a3"/></svg>
<svg style="left:1876px;top:842px" width="12" height="7" viewBox="0 0 12 7"><path d="M0 0H12L6 6Z" fill="#505050"/></svg>
<div class="t" style="left:350px;top:882px;font-size:20.9px;color:#333">Total discovery jobs: 7 &nbsp;| 2 discovery jobs selected</div>
<!-- context menu -->
<div class="a" style="left:591px;top:637px;width:270px;height:186px;background:#fff;border:1px solid #cfcfcf;box-shadow:0 2px 4px rgba(0,0,0,0.12);z-index:5">
 <div class="a" style="left:10px;top:13px;width:25px;height:23px;background:#333;border-radius:3px"></div>
 <svg style="left:18px;top:18px" width="10" height="13" viewBox="0 0 10 13"><path d="M0.5 0.5L9.5 6.5L0.5 12.5Z" fill="#fff"/></svg>
 <div class="t" style="left:51px;top:9.5px;font-size:20.3px;color:#333">Start Jobs</div>
 <div class="a" style="left:13px;top:60px;width:20px;height:20px;background:#333"></div>
 <div class="t" style="left:51px;top:55px;font-size:20.3px;color:#333">Stop Jobs</div>
 <div class="a" style="left:0;top:91px;width:268px;height:1px;background:#ddd"></div>
 <svg style="left:9px;top:103px" width="26" height="29" viewBox="0 0 26 29"><path d="M3 2.5H16.5L24 10V26.5Q24 27.8 22.8 27.8H4.2Q3 27.8 3 26.5V22M3 13V3.5Q3 2.5 4 2.5" stroke="#aaa" stroke-width="2.3" fill="none"/><path d="M16 2.5L24 10H16Z" fill="#aaa"/><rect x="1" y="12.5" width="24" height="10" rx="1.5" fill="#aaa"/><text x="2.8" y="21" font-family="Liberation Sans" font-weight="700" font-size="8.8" fill="#fff">LOG</text></svg>
 <div class="t" style="left:51px;top:101.5px;font-size:20.3px;color:#aaa">Logs</div>
 <div class="a" style="left:0;top:138.5px;width:268px;height:1px;background:#ddd"></div>
 <svg style="left:10px;top:149px" width="26" height="29" viewBox="0 0 26 29"><rect x="1" y="2.5" width="24" height="26" rx="2" fill="#aaa"/><rect x="9.5" y="0.8" width="7" height="3" rx="1" fill="#aaa"/><g fill="#fff"><rect x="5" y="8.5" width="3" height="2.4"/><rect x="5" y="14" width="3" height="2.4"/><rect x="5" y="19.5" width="3" height="2.4"/><rect x="10" y="8.5" width="11" height="2.4"/><rect x="10" y="14" width="11" height="2.4"/><rect x="10" y="19.5" width="11" height="2.4"/></g></svg>
 <div class="t" style="left:51px;top:148px;font-size:20.3px;color:#aaa">Details</div>
</div>
<!-- cursor -->
<svg style="left:584px;top:634px;z-index:6" width="22" height="28" viewBox="0 0 22 28"><path d="M6 2.5Q6 1 7.5 1Q9 1 9 2.5V12L10 11.5V9Q10 8 11.3 8Q12.5 8 12.5 9V12L13.5 11.8V10.3Q13.5 9.2 14.8 9.2Q16 9.2 16 10.3V12.5L17 12.3V11.5Q17 10.5 18.2 10.5Q19.5 10.5 19.5 11.5V19Q19.5 22 17.5 25H8.5L3 17.5Q2 16 3.2 15.2Q4.3 14.5 5.3 15.6L6 16.5Z" fill="#fff" stroke="#111" stroke-width="1.1" stroke-linejoin="round"/></svg>

<!-- ============ CARD 2: DEVICE DISCOVERY STATUS ============ -->
<div class="a" style="left:327px;top:962px;width:779px;height:415px;background:#f2f2f2;border-radius:4px;box-shadow:0 3px 4px -1px rgba(0,0,0,.22),0 1px 9px 0 rgba(0,0,0,.12)"></div>
<svg style="left:348px;top:988px" width="34" height="26" viewBox="0 0 34 26"><path d="M3 20V3.5H29" stroke="#333" stroke-width="2.6" fill="none" stroke-linejoin="round"/><path d="M2 20.5H10" stroke="#333" stroke-width="2.6"/><rect x="22.5" y="9" width="8.5" height="12" rx="1" stroke="#333" stroke-width="2.4" fill="none"/><circle cx="15" cy="17.5" r="3" stroke="#333" stroke-width="2.2" fill="none"/><path d="M12.5 20L13 22H17L17.5 20" stroke="#333" stroke-width="2" fill="none"/></svg>
<div class="t" style="left:387.5px;top:987px;font-size:19px;color:#444">Device Discovery Status</div>
<svg style="left:615px;top:998px" width="28" height="11" viewBox="0 0 28 11"><g fill="#222"><circle cx="5" cy="5" r="2.6"/><circle cx="14.8" cy="5" r="3"/><circle cx="23.7" cy="5" r="1.8"/></g></svg>
<!-- card header icons -->
<svg style="left:995px;top:991px" width="24" height="24" viewBox="0 0 24 24"><circle cx="11.5" cy="11.7" r="10.2" fill="#2d2d2d"/><path d="M8.3 9C8.3 7 9.8 5.8 11.6 5.8C13.5 5.8 14.8 7 14.8 8.7C14.8 11 12.3 11.2 12.3 13.7" stroke="#fff" stroke-width="2.3" fill="none"/><circle cx="12.2" cy="17" r="1.4" fill="#fff"/></svg>
<svg style="left:1026px;top:991px" width="26" height="26" viewBox="0 0 26 26"><path d="M12 2.5H4.5Q2.7 2.5 2.7 4.3V19.8Q2.7 21.6 4.5 21.6H20Q21.8 21.6 21.8 19.8V12.2" stroke="#2d2d2d" stroke-width="2.3" fill="none"/><path d="M9.8 15.2L21 4" stroke="#2d2d2d" stroke-width="2.3"/><path d="M15 2H22.7V9.7Z" fill="#2d2d2d"/><path d="M15 2H22.7V9.7" stroke="#2d2d2d" stroke-width="1.5" fill="none"/></svg>
<svg style="left:1059px;top:991px" width="24" height="24" viewBox="0 0 24 24"><path d="M21.5 3L15 9.5M3 21.5L9.5 15" stroke="#2d2d2d" stroke-width="2.3"/><path d="M13 4.5V11H19.5Z" fill="#2d2d2d"/><path d="M4.8 13.3H11.2V19.7Z" fill="#2d2d2d"/></svg>
<div class="a" style="left:348px;top:1022px;width:736px;height:1.5px;background:#d3d3d3"></div>
<div class="t" style="left:349.5px;top:1026px;font-size:19.5px;color:#444">Lookup hostname: 'TestVM - Windows 10 Pro - Kaspersky Antivirus' using DNS ser...</div>
<!-- donut 83 -->
<div class="a" style="left:355px;top:1090.5px;width:190px;height:190px;border-radius:50%;background:radial-gradient(circle closest-side,#f2f2f2 0,#f2f2f2 56.6%,#b3b3f3 57.3%,#d3d3f5 61%,#e8e8f6 66%,#f2f2f7 72%,#f5f5f8 78.6%,rgba(242,242,242,0) 79%)"></div>
<div class="a" style="left:355px;top:1090.5px;width:190px;height:190px;border-radius:50%;background:conic-gradient(from 90deg,#c6ccfe 0deg,#b0b7fc 90deg,#9aa1fb 180deg,#888dfd 270deg,#7b7cff 298.8deg,transparent 298.8deg);-webkit-mask:radial-gradient(circle closest-side,transparent 78.8%,#000 79.2%,#000 99.5%,transparent 100%)"></div>
<div class="t" style="left:355px;top:1168.5px;width:190px;text-align:center;font-size:31.8px;color:#222">83%</div>
<!-- stats -->
<div class="t sb" style="left:551px;top:1089px;font-size:19.1px;color:#333">Concurrent IP Scans:</div>
<div class="t sb" style="left:551px;top:1129px;font-size:19.1px;color:#333">Scanned IPs:</div>
<div class="t sb" style="left:551px;top:1169.5px;font-size:19.1px;color:#333">Manual IP Scans (Pending):</div>
<div class="t sb" style="left:551px;top:1210px;font-size:19.1px;color:#333">Scan Duration per IP (avg):</div>
<div class="t sb" style="left:551px;top:1250px;font-size:19.1px;color:#333">Total Devices:</div>
<div class="a" style="left:812px;top:1088.7px;width:246px;height:16px;background:#e4e4e4"></div>
<div class="a" style="left:812px;top:1088.7px;width:171px;height:16px;background:#4b5889"></div>
<div class="a" style="left:811.5px;top:1084px;width:1.1px;height:24.5px;background:#222"></div>
<div class="a" style="left:808px;top:1107.5px;width:4px;height:1.1px;background:#222"></div>
<div class="a" style="left:1057px;top:1084px;width:1.2px;height:24px;background:#c9c9c9"></div>
<div class="t" style="left:989.5px;top:1081px;font-size:13.5px;color:#444">34</div>
<div class="t" style="left:808.5px;top:1102px;font-size:13.5px;color:#333">0</div>
<div class="t" style="left:1050.5px;top:1102px;font-size:13.5px;color:#333">49</div>
<div class="t" style="left:809.5px;top:1129px;font-size:19.3px;color:#444">172 of 208</div>
<div class="t" style="left:809.5px;top:1169.5px;font-size:19.3px;color:#444">0</div>
<div class="t" style="left:809.5px;top:1210px;font-size:19.3px;color:#444">2min 19sec (1261 IPs/h)</div>
<div class="t" style="left:809.5px;top:1250px;font-size:19.3px;color:#4949e0">344</div>
<!-- details button -->
<div class="a" style="left:938.5px;top:1308px;width:145px;height:47px;border:1.2px solid #d6d6d6;border-radius:4px;background:#f2f2f2"></div>
<svg style="left:964px;top:1318px" width="26" height="28" viewBox="0 0 26 28"><rect x="1" y="3" width="23" height="24" rx="2.5" fill="#2a2a2a"/><rect x="8.5" y="0.8" width="8" height="4" rx="1" fill="#2a2a2a"/><g fill="#f2f2f2"><rect x="5" y="9" width="3" height="2.6"/><rect x="5" y="14" width="3" height="2.6"/><rect x="5" y="19" width="3" height="2.6"/><rect x="10" y="9" width="10" height="2.6"/><rect x="10" y="14" width="10" height="2.6"/><rect x="10" y="19" width="10" height="2.6"/></g></svg>
<div class="t" style="left:1003.5px;top:1315px;font-size:19.5px;color:#444">Details</div>

<!-- ============ CARD 3: PING DISCOVERY STATUS ============ -->
<div class="a" style="left:1137px;top:962px;width:779px;height:415px;background:#f2f2f2;border-radius:4px;box-shadow:0 3px 4px -1px rgba(0,0,0,.22),0 1px 9px 0 rgba(0,0,0,.12)"></div>
<svg style="left:1158px;top:986px" width="34" height="28" viewBox="0 0 34 28"><circle cx="16.5" cy="4.7" r="2.7" fill="#333"/><path d="M16.5 5V12.6M4 23.8V14.6Q4 12.6 6 12.6H27Q29 12.6 29 14.6V23.8M12 12.6V23.8M20.3 12.6V23.8" stroke="#333" stroke-width="2.4" fill="none"/><g fill="#333"><circle cx="4" cy="23.8" r="2.8"/><circle cx="12" cy="23.8" r="2.8"/><circle cx="20.3" cy="23.8" r="2.8"/><circle cx="28.7" cy="23.8" r="2.8"/></g></svg>
<div class="t" style="left:1197.5px;top:987px;font-size:19px;color:#444">Ping Discovery Status</div>
<svg style="left:1805px;top:991px" width="24" height="24" viewBox="0 0 24 24"><circle cx="11.5" cy="11.7" r="10.2" fill="#2d2d2d"/><path d="M8.3 9C8.3 7 9.8 5.8 11.6 5.8C13.5 5.8 14.8 7 14.8 8.7C14.8 11 12.3 11.2 12.3 13.7" stroke="#fff" stroke-width="2.3" fill="none"/><circle cx="12.2" cy="17" r="1.4" fill="#fff"/></svg>
<svg style="left:1836px;top:991px" width="26" height="26" viewBox="0 0 26 26"><path d="M12 2.5H4.5Q2.7 2.5 2.7 4.3V19.8Q2.7 21.6 4.5 21.6H20Q21.8 21.6 21.8 19.8V12.2" stroke="#2d2d2d" stroke-width="2.3" fill="none"/><path d="M9.8 15.2L21 4" stroke="#2d2d2d" stroke-width="2.3"/><path d="M15 2H22.7V9.7Z" fill="#2d2d2d"/><path d="M15 2H22.7V9.7" stroke="#2d2d2d" stroke-width="1.5" fill="none"/></svg>
<svg style="left:1869px;top:991px" width="24" height="24" viewBox="0 0 24 24"><path d="M21.5 3L15 9.5M3 21.5L9.5 15" stroke="#2d2d2d" stroke-width="2.3"/><path d="M13 4.5V11H19.5Z" fill="#2d2d2d"/><path d="M4.8 13.3H11.2V19.7Z" fill="#2d2d2d"/></svg>
<div class="a" style="left:1158px;top:1022px;width:736px;height:1.5px;background:#d3d3d3"></div>
<div class="t" style="left:1159.5px;top:1026px;font-size:19.5px;color:#444">Idle</div>
<!-- donut 100 -->
<div class="a" style="left:1165px;top:1090.5px;width:190px;height:190px;border-radius:50%;background:radial-gradient(circle closest-side,#f2f2f2 0,#f2f2f2 56.6%,#b3b3f3 57.3%,#d3d3f5 61%,#e8e8f6 66%,#f2f2f7 72%,#f5f5f8 78.6%,rgba(242,242,242,0) 79%)"></div>
<div class="a" style="left:1165px;top:1090.5px;width:190px;height:190px;border-radius:50%;background:conic-gradient(from 90deg,#c6ccfe 0deg,#b0b7fc 90deg,#9aa1fb 180deg,#888dfd 270deg,#6d6dff 360deg);-webkit-mask:radial-gradient(circle closest-side,transparent 78.8%,#000 79.2%,#000 99.5%,transparent 100%)"></div>
<svg style="left:1313px;top:1182px" width="44" height="6" viewBox="0 0 44 6"><path d="M0 3.2L42 1.6V4.2Z" fill="#7f82fa"/></svg>
<div class="t" style="left:1165px;top:1168.5px;width:190px;text-align:center;font-size:31px;color:#222">100%</div>
<div class="t sb" style="left:1521px;top:1089px;font-size:18.8px;color:#333">Discovery Job</div>
<div class="t sb" style="left:1708px;top:1089px;font-size:18.8px;color:#333">Manual (Pending)</div>
<div class="t sb" style="left:1361px;top:1129px;font-size:19.1px;color:#333">Networks:</div>
<div class="t sb" style="left:1361px;top:1169.5px;font-size:19.1px;color:#333">IP Ranges:</div>
<div class="t sb" style="left:1361px;top:1210px;font-size:19.1px;color:#333">IP Addresses:</div>
<div class="t" style="left:1521px;top:1129px;font-size:19.3px;color:#444">8 of 8</div>
<div class="t" style="left:1521px;top:1169.5px;font-size:19.3px;color:#444">0 of 0</div>
<div class="t" style="left:1521px;top:1210px;font-size:19.3px;color:#444">2040 of 2040</div>
<div class="t" style="left:1708px;top:1129px;font-size:19.3px;color:#444">0</div>
<div class="t" style="left:1708px;top:1169.5px;font-size:19.3px;color:#444">0</div>
<div class="t" style="left:1708px;top:1210px;font-size:19.3px;color:#444">0</div>
<div class="a" style="left:1748px;top:1308px;width:146px;height:47px;border:1.2px solid #d6d6d6;border-radius:4px;background:#f2f2f2"></div>
<svg style="left:1774px;top:1318px" width="26" height="28" viewBox="0 0 26 28"><rect x="1" y="3" width="23" height="24" rx="2.5" fill="#2a2a2a"/><rect x="8.5" y="0.8" width="8" height="4" rx="1" fill="#2a2a2a"/><g fill="#f2f2f2"><rect x="5" y="9" width="3" height="2.6"/><rect x="5" y="14" width="3" height="2.6"/><rect x="5" y="19" width="3" height="2.6"/><rect x="10" y="9" width="10" height="2.6"/><rect x="10" y="14" width="10" height="2.6"/><rect x="10" y="19" width="10" height="2.6"/></g></svg>
<div class="t" style="left:1813.5px;top:1315px;font-size:19.5px;color:#444">Details</div>

<!-- ============ CARD 4: NETWORK SYNC ============ -->
<div class="a" style="left:327px;top:1408px;width:779px;height:294px;background:#f2f2f2;border-radius:4px;box-shadow:0 3px 4px -1px rgba(0,0,0,.22),0 1px 9px 0 rgba(0,0,0,.12)"></div>
<svg style="left:350px;top:1431px" width="30" height="30" viewBox="0 0 30 30"><path d="M10.5 2.5C6.5 4 4 7.8 4 12C4 16.5 7 20.2 11 21.5C9 18.5 8.3 15 8.3 12C8.3 8.8 9 5.5 10.5 2.5Z" fill="#2d2d2d"/><path d="M18.5 2.5C22.5 4 25 7.8 25 12C25 16.5 22 20.2 18 21.5C20 18.5 20.7 15 20.7 12C20.7 8.8 20 5.5 18.5 2.5Z" fill="#2d2d2d"/><path d="M14.5 2C12 5 11 8.5 11 12C11 15.5 12 18.8 14.5 22C17 18.8 18 15.5 18 12C18 8.5 17 5 14.5 2Z" fill="#2d2d2d"/><rect x="3" y="10.5" width="23" height="2.4" fill="#f2f2f2"/><rect x="13.3" y="21" width="2.4" height="5" fill="#2d2d2d"/><rect x="1" y="25.6" width="27" height="2.6" fill="#2d2d2d"/></svg>
<div class="t" style="left:387.3px;top:1433px;font-size:19px;color:#444">Network Sync Status</div>
<svg style="left:1026px;top:1437px" width="24" height="24" viewBox="0 0 24 24"><circle cx="11.5" cy="11.7" r="10.2" fill="#2d2d2d"/><path d="M8.3 9C8.3 7 9.8 5.8 11.6 5.8C13.5 5.8 14.8 7 14.8 8.7C14.8 11 12.3 11.2 12.3 13.7" stroke="#fff" stroke-width="2.3" fill="none"/><circle cx="12.2" cy="17" r="1.4" fill="#fff"/></svg>
<svg style="left:1059px;top:1436px" width="24" height="24" viewBox="0 0 24 24"><path d="M21.5 3L15 9.5M3 21.5L9.5 15" stroke="#2d2d2d" stroke-width="2.3"/><path d="M13 4.5V11H19.5Z" fill="#2d2d2d"/><path d="M4.8 13.3H11.2V19.7Z" fill="#2d2d2d"/></svg>
<div class="a" style="left:348px;top:1468px;width:736px;height:1.5px;background:#d3d3d3"></div>
<div class="t" style="left:349.5px;top:1472px;font-size:19.5px;color:#444">Idle</div>
<div class="t sb" style="left:348.6px;top:1535px;font-size:19.4px;color:#333">Synchronized</div>
<div class="t sb" style="left:493.7px;top:1535px;font-size:19.4px;color:#333">Added</div>
<div class="t sb" style="left:578px;top:1535px;font-size:19.4px;color:#333">Removed</div>
<div class="t sb" style="left:348.6px;top:1568.5px;font-size:19.4px;color:#333">1</div>
<div class="t sb" style="left:493.7px;top:1568.5px;font-size:19.4px;color:#333">0</div>
<div class="t sb" style="left:578px;top:1568.5px;font-size:19.4px;color:#333">0</div>
<div class="t" style="left:349.8px;top:1617.5px;font-size:19.6px;font-style:italic;color:#444">Network synchronization completed at 12 Jan 2022 12:50:03</div>

<!-- ============ CARD 5: DIRECTORY SYNC ============ -->
<div class="a" style="left:1137px;top:1408px;width:779px;height:294px;background:#f2f2f2;border-radius:4px;box-shadow:0 3px 4px -1px rgba(0,0,0,.22),0 1px 9px 0 rgba(0,0,0,.12)"></div>
<svg style="left:1160px;top:1432px" width="30" height="28" viewBox="0 0 30 28"><rect x="11.8" y="0.5" width="4.6" height="4.6" fill="#2d2d2d"/><path d="M14 4V6.5Q14 7.5 12 8.5L7.5 10.5Q6 11.5 6 13V16M14 6.5Q14 7.5 16 8.5L20.5 10.5Q22 11.5 22 13V16" stroke="#2d2d2d" stroke-width="2.3" fill="none"/><rect x="3.8" y="12.5" width="4.6" height="4.6" fill="#2d2d2d"/><rect x="19.8" y="12.5" width="4.6" height="4.6" fill="#2d2d2d"/><path d="M6 17V18.5Q6 19.5 4 20.5L3 21.5V23M6 18.5Q6 19.5 8 20.5L9 21.5V23M22 17V18.5Q22 19.5 20 20.5L19 21.5V23M22 18.5Q22 19.5 24 20.5L25 21.5V23" stroke="#2d2d2d" stroke-width="2.2" fill="none"/><rect x="0.5" y="22" width="5.5" height="4.7" fill="#2d2d2d"/><rect x="6.5" y="22" width="5.5" height="4.7" fill="#2d2d2d"/><rect x="16" y="22" width="5.5" height="4.7" fill="#2d2d2d"/><rect x="22" y="22" width="5.5" height="4.7" fill="#2d2d2d"/></svg>
<div class="t" style="left:1197.5px;top:1433px;font-size:19px;color:#444">Directory Sync Status</div>
<svg style="left:1836px;top:1437px" width="24" height="24" viewBox="0 0 24 24"><circle cx="11.5" cy="11.7" r="10.2" fill="#2d2d2d"/><path d="M8.3 9C8.3 7 9.8 5.8 11.6 5.8C13.5 5.8 14.8 7 14.8 8.7C14.8 11 12.3 11.2 12.3 13.7" stroke="#fff" stroke-width="2.3" fill="none"/><circle cx="12.2" cy="17" r="1.4" fill="#fff"/></svg>
<svg style="left:1869px;top:1436px" width="24" height="24" viewBox="0 0 24 24"><path d="M21.5 3L15 9.5M3 21.5L9.5 15" stroke="#2d2d2d" stroke-width="2.3"/><path d="M13 4.5V11H19.5Z" fill="#2d2d2d"/><path d="M4.8 13.3H11.2V19.7Z" fill="#2d2d2d"/></svg>
<div class="a" style="left:1158px;top:1468px;width:736px;height:1.5px;background:#d3d3d3"></div>
<div class="t" style="left:1159.5px;top:1472px;font-size:19.5px;color:#444">Idle</div>
<div class="t sb" style="left:1158.3px;top:1535px;font-size:19.4px;color:#333">Synchronized</div>
<div class="t sb" style="left:1304.5px;top:1535px;font-size:19.4px;color:#333">Added</div>
<div class="t sb" style="left:1388px;top:1535px;font-size:19.4px;color:#333">Removed</div>
<div class="t sb" style="left:1158.3px;top:1568.5px;font-size:19.4px;color:#333">193</div>
<div class="t sb" style="left:1304.5px;top:1568.5px;font-size:19.4px;color:#333">0</div>
<div class="t sb" style="left:1388px;top:1568.5px;font-size:19.4px;color:#333">0</div>
<div class="t" style="left:1159.8px;top:1617.5px;font-size:19.6px;font-style:italic;color:#444">Directory synchronization completed at 12 Jan 2022 12:53:49</div>

<!-- ============ BOTTOM BUTTONS ============ -->
<div class="a" style="left:326px;top:1888px;width:439px;height:59px;background:#f2f2f2;border-radius:4px;box-shadow:0 3px 4px -1px rgba(0,0,0,.22),0 1px 9px 0 rgba(0,0,0,.12)"></div>
<svg style="left:341px;top:1903px" width="30" height="30" viewBox="0 0 30 30"><path d="M10.5 2.5C6.5 4 4 7.8 4 12C4 16.5 7 20.2 11 21.5C9 18.5 8.3 15 8.3 12C8.3 8.8 9 5.5 10.5 2.5Z" fill="#2d2d2d"/><path d="M18.5 2.5C22.5 4 25 7.8 25 12C25 16.5 22 20.2 18 21.5C20 18.5 20.7 15 20.7 12C20.7 8.8 20 5.5 18.5 2.5Z" fill="#2d2d2d"/><path d="M14.5 2C12 5 11 8.5 11 12C11 15.5 12 18.8 14.5 22C17 18.8 18 15.5 18 12C18 8.5 17 5 14.5 2Z" fill="#2d2d2d"/><rect x="3" y="10.5" width="23" height="2.4" fill="#f2f2f2"/><rect x="13.3" y="21" width="2.4" height="5" fill="#2d2d2d"/><rect x="1" y="25.6" width="27" height="2.6" fill="#2d2d2d"/></svg>
<div class="t" style="left:393.7px;top:1902.5px;font-size:19.8px;color:#444">Network Neighborhood Discovery Status</div>
<div class="a" style="left:786px;top:1888px;width:375px;height:59px;background:#f2f2f2;border-radius:4px;box-shadow:0 3px 4px -1px rgba(0,0,0,.22),0 1px 9px 0 rgba(0,0,0,.12)"></div>
<svg style="left:801px;top:1903px" width="30" height="28" viewBox="0 0 30 28"><rect x="11.8" y="0.5" width="4.6" height="4.6" fill="#2d2d2d"/><path d="M14 4V6.5Q14 7.5 12 8.5L7.5 10.5Q6 11.5 6 13V16M14 6.5Q14 7.5 16 8.5L20.5 10.5Q22 11.5 22 13V16" stroke="#2d2d2d" stroke-width="2.3" fill="none"/><rect x="3.8" y="12.5" width="4.6" height="4.6" fill="#2d2d2d"/><rect x="19.8" y="12.5" width="4.6" height="4.6" fill="#2d2d2d"/><path d="M6 17V18.5Q6 19.5 4 20.5L3 21.5V23M6 18.5Q6 19.5 8 20.5L9 21.5V23M22 17V18.5Q22 19.5 20 20.5L19 21.5V23M22 18.5Q22 19.5 24 20.5L25 21.5V23" stroke="#2d2d2d" stroke-width="2.2" fill="none"/><rect x="0.5" y="22" width="5.5" height="4.7" fill="#2d2d2d"/><rect x="6.5" y="22" width="5.5" height="4.7" fill="#2d2d2d"/><rect x="16" y="22" width="5.5" height="4.7" fill="#2d2d2d"/><rect x="22" y="22" width="5.5" height="4.7" fill="#2d2d2d"/></svg>
<div class="t" style="left:853.2px;top:1902.5px;font-size:19.5px;color:#444">Directory Discovery Queue Status</div>

</body></html>
